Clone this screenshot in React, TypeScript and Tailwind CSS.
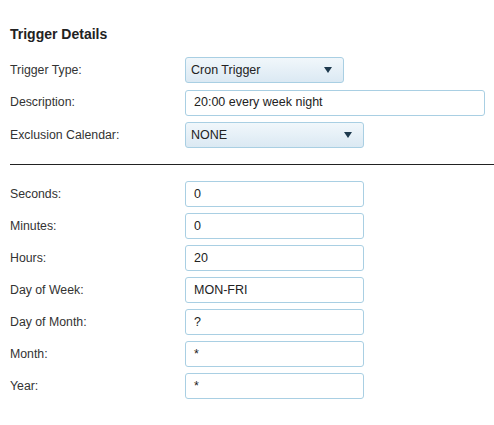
import React from 'react'

const selectCls =
  'flex items-center justify-between h-[26px] pl-[5px] pr-[11px] rounded-[3px] border border-[#a9cfe3] bg-gradient-to-b from-[#f1f7fb] to-[#dbe9f3] text-[12.5px] text-[#222]'
const inputCls =
  'flex items-center h-[26px] pl-[8px] rounded-[3px] border border-[#a9cfe3] bg-white text-[12.5px] text-[#222]'

function Arrow() {
  return (
    <svg width="8" height="6" viewBox="0 0 8 6">
      <path d="M0 0h8L4 6z" fill="#1e3a4e" />
    </svg>
  )
}

function Row({ label, children }: { label: string; children: React.ReactNode }) {
  return (
    <div className="flex items-center">
      <div className="w-[175px] text-[12.3px] text-[#333]">{label}</div>
      {children}
    </div>
  )
}

export default function App() {
  const cron = [
    ['Seconds:', '0'],
    ['Minutes:', '0'],
    ['Hours:', '20'],
    ['Day of Week:', 'MON-FRI'],
    ['Day of Month:', '?'],
    ['Month:', '*'],
    ['Year:', '*'],
  ]

  return (
    <div className="w-[494px] h-[425px] bg-white pl-[10px] pt-[24px] font-['Liberation_Sans',Arial,sans-serif]">
      <h2 className="text-[14px] leading-[20px] font-bold text-[#222]">Trigger Details</h2>

      <div className="mt-[13px] flex flex-col gap-[6.5px]">
        <Row label="Trigger Type:">
          <div className={selectCls + ' w-[159px]'}>
            <span>Cron Trigger</span>
            <Arrow />
          </div>
        </Row>
        <Row label="Description:">
          <div className={inputCls + ' w-[300px]'}>20:00 every week night</div>
        </Row>
        <Row label="Exclusion Calendar:">
          <div className={selectCls + ' w-[179px]'}>
            <span>NONE</span>
            <Arrow />
          </div>
        </Row>
      </div>

      <hr className="mt-[16px] border-0 border-t border-[#222]" />

      <div className="mt-[16px] flex flex-col gap-[6px]">
        {cron.map(([label, value]) => (
          <Row key={label} label={label}>
            <div className={inputCls + ' w-[179px]'}>{value}</div>
          </Row>
        ))}
      </div>
    </div>
  )
}
